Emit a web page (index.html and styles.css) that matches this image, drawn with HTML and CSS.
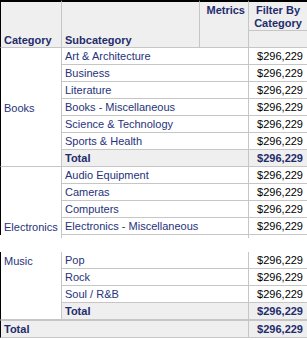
FILE: index.html
```html
<!DOCTYPE html>
<html>
<head>
<meta charset="utf-8">
<link rel="stylesheet" href="styles.css">
</head>
<body>
<table class="grid">
  <colgroup>
    <col class="col-cat">
    <col class="col-sub">
    <col class="col-met">
    <col class="col-num">
  </colgroup>
  <thead>
    <tr class="head-top">
      <th rowspan="2" class="h h-cat">Category</th>
      <th rowspan="2" class="h h-sub">Subcategory</th>
      <th rowspan="2" class="h h-met">Metrics</th>
      <th class="h h-fil">Filter By<br>Category</th>
    </tr>
    <tr class="head-bot">
      <th class="h h-empty"></th>
    </tr>
  </thead>
  <tbody>
    <tr><td class="cat"></td><td colspan="2" class="sub">Art &amp; Architecture</td><td class="num">$296,229</td></tr>
    <tr><td class="cat"></td><td colspan="2" class="sub">Business</td><td class="num">$296,229</td></tr>
    <tr><td class="cat"></td><td colspan="2" class="sub">Literature</td><td class="num">$296,229</td></tr>
    <tr><td class="cat">Books</td><td colspan="2" class="sub">Books - Miscellaneous</td><td class="num">$296,229</td></tr>
    <tr><td class="cat"></td><td colspan="2" class="sub">Science &amp; Technology</td><td class="num">$296,229</td></tr>
    <tr><td class="cat"></td><td colspan="2" class="sub">Sports &amp; Health</td><td class="num">$296,229</td></tr>
    <tr class="total"><td class="cat cat-end"></td><td colspan="2" class="sub">Total</td><td class="num">$296,229</td></tr>

    <tr><td class="cat"></td><td colspan="2" class="sub">Audio Equipment</td><td class="num">$296,229</td></tr>
    <tr><td class="cat"></td><td colspan="2" class="sub">Cameras</td><td class="num">$296,229</td></tr>
    <tr><td class="cat"></td><td colspan="2" class="sub">Computers</td><td class="num">$296,229</td></tr>
    <tr><td class="cat">Electronics</td><td colspan="2" class="sub">Electronics - Miscellaneous</td><td class="num">$296,229</td></tr>

    <tr class="gap-stub"><td class="stub stub-line"></td><td colspan="2" class="stub stub-line"></td><td class="stub"></td></tr>
    <tr class="gap"><td class="blank"></td><td colspan="2" class="blank"></td><td class="blank"></td></tr>

    <tr><td class="cat">Music</td><td colspan="2" class="sub">Pop</td><td class="num">$296,229</td></tr>
    <tr><td class="cat"></td><td colspan="2" class="sub">Rock</td><td class="num">$296,229</td></tr>
    <tr><td class="cat"></td><td colspan="2" class="sub">Soul / R&amp;B</td><td class="num">$296,229</td></tr>
    <tr class="total"><td class="cat cat-end"></td><td colspan="2" class="sub">Total</td><td class="num">$296,229</td></tr>

    <tr class="total grand"><td colspan="3" class="gt-label">Total</td><td class="num">$296,229</td></tr>
  </tbody>
</table>
</body>
</html>
```

FILE: styles.css
```css
* {
  box-sizing: border-box;
}

body {
  margin: 0;
  background: #ffffff;
}

.grid {
  border-collapse: separate;
  border-spacing: 0;
  table-layout: fixed;
  width: 307px;
  font-family: "Liberation Sans", Arial, sans-serif;
  font-size: 11px;
  color: #26337a;
}

.col-cat { width: 62px; }
.col-sub { width: 138px; }
.col-met { width: 49px; }
.col-num { width: 58px; }

/* header */
.h {
  background: #efefef;
  color: #1f2c6c;
  font-weight: bold;
  padding: 0 3px;
  border-right: 1px solid #c6c6c6;
  border-bottom: 1px solid #c6c6c6;
  border-top: 2px solid #000;
}

.head-bot .h {
  border-top: 0;
  height: 17px;
}

.head-top .h {
  height: 30px;
}

.h-cat,
.h-sub {
  vertical-align: bottom;
  text-align: left;
  line-height: 13px;
}

.h-cat {
  border-left: 1px solid #000;
  height: 47px;
}

.h-met {
  vertical-align: top;
  text-align: right;
  line-height: 13px;
  padding-top: 2px;
}

.h-fil {
  vertical-align: top;
  text-align: center;
  line-height: 13px;
  padding-top: 2px;
  border-right: 0;
}

.h-empty {
  border-right: 0;
}

/* body rows */
td {
  padding: 1px 3px 0;
  line-height: 15px;
  white-space: nowrap;
  overflow: hidden;
}

.cat {
  border-left: 1px solid #000;
  border-right: 1px solid #c6c6c6;
  color: #26337a;
}

.cat-end {
  border-bottom: 1px solid #c6c6c6;
}

.sub {
  border-right: 1px solid #c6c6c6;
  border-bottom: 1px solid #c6c6c6;
}

.num {
  text-align: right;
  padding-right: 4px;
  color: #000;
  border-bottom: 1px solid #c6c6c6;
}

.total .sub,
.total .num {
  background: #efefef;
  font-weight: bold;
  color: #1f2c6c;
}

.gt-label {
  background: #efefef;
  font-weight: bold;
  color: #1f2c6c;
  border-left: 1px solid #000;
  border-top: 1px solid #c6c6c6;
  border-right: 1px solid #c6c6c6;
  border-bottom: 1px solid #c6c6c6;
}

.grand .num {
  border-top: 1px solid #c6c6c6;
}

/* the broken empty row between Electronics and Music */
.stub {
  padding: 0;
  height: 3px;
  line-height: 0;
  font-size: 0;
}

.stub-line {
  border-right: 1px solid #c6c6c6;
}

.blank {
  padding: 0;
  height: 14px;
  line-height: 0;
  font-size: 0;
}
```
